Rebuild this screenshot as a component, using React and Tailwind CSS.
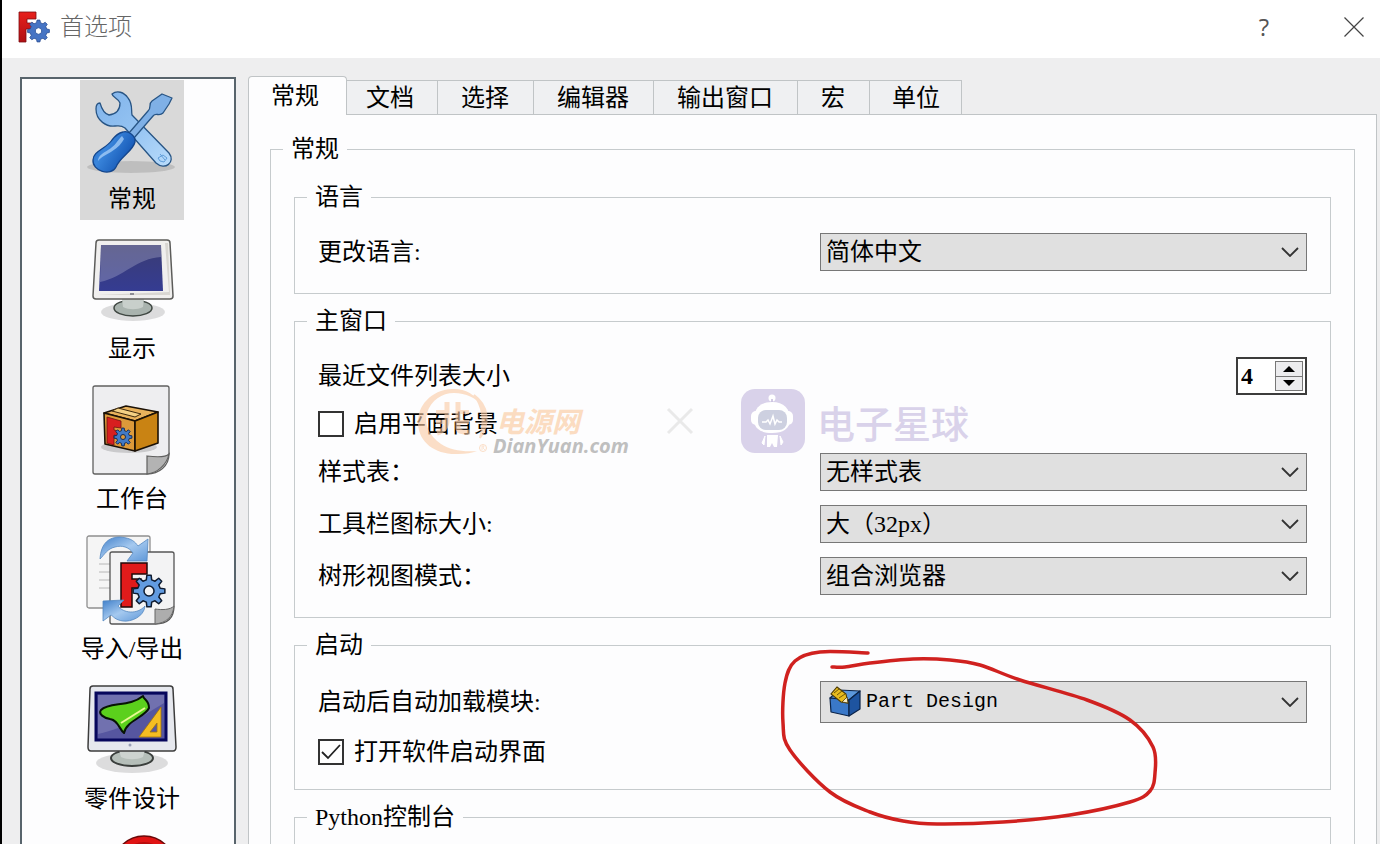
import React, { useState } from "react";

const FONT = "font-['Liberation_Serif','Noto_Sans_CJK_SC',sans-serif]";

function gearPath(cx, cy, outer, inner, teeth) {
  const step = (Math.PI * 2) / teeth;
  const pts = [];
  for (let i = 0; i < teeth; i++) {
    const a = i * step - Math.PI / 2;
    [
      [-0.3, inner],
      [-0.17, outer],
      [0.17, outer],
      [0.3, inner],
    ].forEach(([k, r]) => {
      pts.push(`${(cx + Math.cos(a + k * step) * r).toFixed(2)} ${(cy + Math.sin(a + k * step) * r).toFixed(2)}`);
    });
  }
  return `M${pts.join("L")}Z`;
}

function smoothPath(points) {
  let d = `M${points[0][0]} ${points[0][1]}`;
  for (let i = 0; i < points.length - 1; i++) {
    const p0 = points[i - 1] || points[i];
    const p1 = points[i];
    const p2 = points[i + 1];
    const p3 = points[i + 2] || p2;
    d += `C${p1[0] + (p2[0] - p0[0]) / 6} ${p1[1] + (p2[1] - p0[1]) / 6} ${p2[0] - (p3[0] - p1[0]) / 6} ${p2[1] - (p3[1] - p1[1]) / 6} ${p2[0]} ${p2[1]}`;
  }
  return d;
}

function AppLogo() {
  return (
    <svg viewBox="0 0 32 32" className="size-8" aria-hidden="true">
      <defs>
        <linearGradient id="logoRed" x1="0" y1="0" x2="0" y2="1">
          <stop offset="0" stopColor="#e8201c" />
          <stop offset="1" stopColor="#b01013" />
        </linearGradient>
      </defs>
      <path d="M1 1H18V8H9V12H15V18H8V31H1Z" fill="url(#logoRed)" stroke="#7c0c12" strokeWidth=".8" />
      <path d={gearPath(20.5, 20, 11, 8.5, 8)} fill="#4674c4" stroke="#2c4f94" strokeWidth=".8" />
      <circle cx="20.500" cy="20" r="3.300" fill="#fff" stroke="#345ca4" />
    </svg>
  );
}

function ToolsIcon() {
  return (
    <svg viewBox="0 0 90 96" className="h-24 w-[90px]" aria-hidden="true">
      <defs>
        <linearGradient id="steel" x1="0" y1="0" x2="1" y2="1">
          <stop offset="0" stopColor="#7fb2ea" />
          <stop offset=".5" stopColor="#94c3f2" />
          <stop offset="1" stopColor="#b9dcfb" />
        </linearGradient>
        <linearGradient id="grip" x1="0" y1="0" x2="1" y2=".6">
          <stop offset="0" stopColor="#1d5bb5" />
          <stop offset=".4" stopColor="#3a86dc" />
          <stop offset="1" stopColor="#0f4fae" />
        </linearGradient>
      </defs>
      <ellipse cx="44" cy="82" rx="44" ry="6" fill="#000" opacity=".12" />
      <path
        d="M25 9C30 5 37 7 41 13C46 19 44 25 45 30L82 68C89 77 78 86 69 78L38 43C34 40 32 41 28 41C20 42 9 36 9 24C9 20 11 18 13 18C15 25 18 29 22 30C30 29 33 24 33 18C31 13 26 13 25 9Z"
        fill="url(#steel)"
        stroke="#285585"
        strokeWidth="1.300"
        strokeLinejoin="round"
      />
      <path d="M42 48L61 26C65 22 61 19 65 16L75 9L85 13L82 19L76 28C72 32 69 27 66 31L47 53Z" fill="#7fb0e6" stroke="#285585" strokeWidth="1.300" strokeLinejoin="round" />
      <path d="M36 47C41 45 49 51 48 57C46 66 33 72 29 82C24 92 5 86 6 75C6 66 19 64 25 55C28 51 32 48 36 47Z" fill="url(#grip)" stroke="#14468c" strokeWidth="1.300" />
      <path d="M35 51C30 56 28 61 21 65C16 68 11 71 11 76C18 68 30 67 37 54Z" fill="#a9d0f8" opacity=".75" />
      <path d="M71 73l5 -3l4 3l-3 4l-4 -1z M73 69l5 6" fill="none" stroke="#4c8fd0" strokeWidth=".8" />
    </svg>
  );
}

function DisplayIcon() {
  return (
    <svg viewBox="0 0 90 96" className="h-24 w-[90px]" aria-hidden="true">
      <defs>
        <linearGradient id="screen" x1="0" y1="0" x2="0" y2="1">
          <stop offset="0" stopColor="#3a3c74" />
          <stop offset="1" stopColor="#353c92" />
        </linearGradient>
      </defs>
      <ellipse cx="46" cy="77" rx="32" ry="9" fill="#000" opacity=".13" />
      <ellipse cx="46" cy="73" rx="19" ry="8" fill="#a9b3ae" stroke="#3f4742" strokeWidth="1.500" />
      <path d="M35 64H57L56 72C50 75 42 75 36 72Z" fill="#c8cfcb" />
      <path d="M12 5H80Q83 5 83 8L86 61Q86 64 83 64H9Q6 64 6 61L9 8Q9 5 12 5Z" fill="#f0efee" stroke="#5c5c5a" strokeWidth="1.500" />
      <path d="M78 8L82 57L10 60H83L81 8Z" fill="#d8d6d2" />
      <path d="M14 10H74L76 56H12Z" fill="url(#screen)" />
      <path d="M14 10H74V22C50 23 37 42 13 47Z" fill="#fff" opacity=".22" />
      <rect x="43" y="58" width="4" height="2" fill="#8c8c94" />
    </svg>
  );
}

function WorkbenchIcon() {
  return (
    <svg viewBox="0 0 90 96" className="h-24 w-[90px]" aria-hidden="true">
      <path d="M8 1H80Q82 1 82 3V69C82 81 72 89 60 89H8Q6 89 6 87V3Q6 1 8 1Z" fill="#eeeef0" stroke="#60605f" strokeWidth="1.300" />
      <ellipse cx="42" cy="62" rx="28" ry="6" fill="#000" opacity=".15" />
      <path d="M60 71C68 72 78 73 82 69C80 79 71 88 60 89Z" fill="#b3b3b3" stroke="#60605f" strokeWidth="1.200" />
      <g stroke="#1b1106" strokeWidth="1.600" strokeLinejoin="round">
        <path d="M17 28L39 21L71 27L48 36Z" fill="#e8b25c" />
        <path d="M17 28L48 36V66L18 59Z" fill="#dd9a3a" />
        <path d="M48 36L71 27V58L48 66Z" fill="#c98313" />
      </g>
      <path d="M25 26L48 32L54 29L31 23Z" fill="#f3d084" stroke="#3c280c" />
      <path d="M20 32L34 36V43L27 42V45L31 46V51L27 50V60L20 58Z" fill="#d81f1f" stroke="#6c1212" strokeWidth=".8" />
      <path d={gearPath(36, 52, 9, 6.5, 8)} fill="#427ac6" stroke="#142c58" />
      <circle cx="36" cy="52" r="2.500" fill="#dd9a3a" stroke="#142c58" />
    </svg>
  );
}

function ImportExportIcon() {
  return (
    <svg viewBox="0 0 90 96" className="h-24 w-[90px] overflow-visible" aria-hidden="true">
      <defs>
        <linearGradient id="arrow" x1="0" y1="0" x2="1" y2="1">
          <stop offset="0" stopColor="#3f7fca" />
          <stop offset=".5" stopColor="#a5c9ef" />
          <stop offset="1" stopColor="#5e97d8" />
        </linearGradient>
      </defs>
      <rect x="0" y="1" width="63" height="72" rx="2" fill="#f5f5f5" stroke="#8f8f8f" strokeWidth="1.300" />
      <path d="M12 29H24M12 37H24M12 45H24M12 53H24" stroke="#b8b8b8" />
      <path d="M25 17H85Q87 17 87 19V71C87 83 80 89 68 89H25Q23 89 23 87V19Q23 17 25 17Z" fill="#f3f3f4" stroke="#555" strokeWidth="1.300" />
      <path d="M68 74C75 75 83 75 87 71C86 82 79 88 68 89Z" fill="#adadad" stroke="#666" />
      <path d="M13 24C14 8 22 2 33 2C45 3 48 7 51 11L61 4L60 26H40L46 18C42 12 35 10 28 12C20 14 18 19 13 24Z" fill="url(#arrow)" stroke="#5488c0" strokeWidth=".8" />
      <path d="M34 28H60V39H45V44H54V53H45V72H34Z" fill="#e01b1b" stroke="#200808" strokeWidth="1.500" />
      <path d="M16 66L37 65L31 71C36 78 50 80 58 71C57 82 44 87 36 86C28 85 26 81 24 80L16 86Z" fill="url(#arrow)" stroke="#5488c0" strokeWidth=".8" />
      <path d={gearPath(62, 56, 16, 11.5, 8)} fill="#629be0" stroke="#0e1b30" strokeWidth="1.500" strokeLinejoin="round" />
      <circle cx="62" cy="56" r="5" fill="#f3f3f4" stroke="#0e1b30" strokeWidth="1.500" />
    </svg>
  );
}

function PartDesignPageIcon() {
  return (
    <svg viewBox="0 0 90 96" className="h-24 w-[90px]" aria-hidden="true">
      <ellipse cx="45" cy="78" rx="36" ry="10" fill="#000" opacity=".13" />
      <ellipse cx="45" cy="73" rx="21" ry="8" fill="#b5beb9" stroke="#3b3f3d" strokeWidth="2" />
      <path d="M32 65H58L56 72C50 75 40 75 34 72Z" fill="#cdd3d0" />
      <path d="M6 1H83Q86 1 86 4L89 62Q89 66 86 66H4Q1 66 1 62L3 4Q3 1 6 1Z" fill="#e6e8ee" stroke="#3c3c3c" strokeWidth="1.500" />
      <rect x="9" y="8" width="70" height="47" fill="#5656a0" stroke="#07075c" strokeWidth="3" />
      <path d="M11 10H77V18C60 28 40 43 11 49Z" fill="#fff" opacity=".16" />
      <path d="M14 25C22 17 43 22 56 11C57 15 62 15 62 23C58 32 39 36 37 48C32 44 31 35 23 34C17 33 11 29 14 25Z" fill="#5bd01c" stroke="#071405" strokeWidth="2" strokeLinejoin="round" />
      <path d="M34 38L58 23" stroke="#eaf994" strokeWidth="2" />
      <path d="M74 22V52H52ZM70 38L63 47H70Z" fill="#f5bd22" fillRule="evenodd" stroke="#a37509" strokeWidth=".8" />
      <circle cx="43" cy="60" r="1.500" fill="#9aa0b8" />
    </svg>
  );
}

function RedPageIcon() {
  return (
    <svg viewBox="0 0 90 96" className="h-24 w-[90px]" aria-hidden="true">
      <circle cx="57" cy="32" r="31" fill="#e01414" stroke="#6a0808" strokeWidth="1.500" />
      <circle cx="57" cy="32" r="25" fill="#b80c0c" />
    </svg>
  );
}

function PartDesignIcon() {
  return (
    <svg viewBox="0 0 32 32" className="pointer-events-none absolute left-[9px] top-[5px] size-8" aria-hidden="true">
      <g stroke="#0b2348" strokeWidth="1.200" strokeLinejoin="round">
        <path d="M1 12L10 4L31 5L20 14Z" fill="#5c98dc" />
        <path d="M1 12L20 14V30L2 26Z" fill="#3a78c8" />
        <path d="M20 14L31 5V23L20 30Z" fill="#1e54a0" />
      </g>
      <path d="M8 1L17 8L19 17L12 16L2 8Z" fill="#e6bb1e" stroke="#4c3a05" strokeWidth="1.100" />
      <path d="M5 7L10 3M8 9L13 5M10 12L16 8" stroke="#6d5608" />
      <path d="M18 11L19 17L13 16Z" fill="#f7ecc8" stroke="#4c3a05" strokeWidth=".8" />
    </svg>
  );
}

const pages = [
  { label: "常规", Icon: ToolsIcon },
  { label: "显示", Icon: DisplayIcon },
  { label: "工作台", Icon: WorkbenchIcon },
  { label: "导入/导出", Icon: ImportExportIcon },
  { label: "零件设计", Icon: PartDesignPageIcon },
  { label: "", Icon: RedPageIcon },
];

const tabs = ["常规", "文档", "选择", "编辑器", "输出窗口", "宏", "单位"];

function Group({ title, children }) {
  return (
    <fieldset className="min-w-0 border border-[#c6cbcd] px-3">
      <legend className="px-2 leading-6">{title}</legend>
      <div className="px-[11px]">{children}</div>
    </fieldset>
  );
}

function Row({ id, label, children }) {
  return (
    <div className="grid grid-cols-2 items-center gap-[15px]">
      <label htmlFor={id} className="leading-6">
        {label}
      </label>
      {children}
    </div>
  );
}

function Select({ id, value, icon }) {
  return (
    <div className="relative">
      <select
        id={id}
        defaultValue={value}
        className={
          icon
            ? "block h-[42px] w-full appearance-none border border-[#777] bg-[#e0e0e0] pl-[45px] pr-10 font-['Liberation_Mono',monospace] text-xl text-black"
            : "block h-[38px] w-full appearance-none border border-[#777] bg-[#e0e0e0] pl-[5px] pr-10 text-2xl leading-8 text-black"
        }
      >
        <option>{value}</option>
      </select>
      {icon}
      <svg viewBox="0 0 18 10" className="pointer-events-none absolute inset-y-0 right-2 my-auto h-[10px] w-[18px]" aria-hidden="true">
        <path d="M1 1L9 9L17 1" fill="none" stroke="#333" strokeWidth="1.800" />
      </svg>
    </div>
  );
}

function CheckRow({ label, checked, onChange }) {
  return (
    <label className="flex h-[30px] items-center gap-[10px]">
      <span className="relative block size-[26px]">
        <input type="checkbox" checked={checked} onChange={onChange} className="block size-[26px] appearance-none border-2 border-[#333] bg-white" />
        {checked && (
          <svg viewBox="0 0 26 26" className="pointer-events-none absolute inset-0 size-[26px]" aria-hidden="true">
            <path d="M4 13L10 19L22 6" fill="none" stroke="#222" strokeWidth="1.800" />
          </svg>
        )}
      </span>
      <span className="leading-6">{label}</span>
    </label>
  );
}

function SpinBox({ id }) {
  const [n, setN] = useState(4);
  return (
    <div className="flex h-[38px] w-[71px] items-center justify-self-end border-2 border-[#3c3c3c] bg-white pr-[2px]">
      <input
        id={id}
        inputMode="numeric"
        value={n}
        onChange={(e) => setN(Number(e.target.value) || 0)}
        className="h-full w-0 flex-1 bg-transparent pl-[3px] text-2xl font-bold outline-none"
      />
      <div className="flex h-[30px] w-7 flex-col border border-[#777] bg-[#ececee]">
        <button type="button" aria-label="增加" onClick={() => setN(n + 1)} className="flex flex-1 items-center justify-center border-b border-[#777]">
          <svg viewBox="0 0 12 6" className="h-[6px] w-3">
            <path d="M6 0L12 6H0Z" />
          </svg>
        </button>
        <button type="button" aria-label="减少" onClick={() => setN(n - 1)} className="flex flex-1 items-center justify-center">
          <svg viewBox="0 0 12 6" className="h-[6px] w-3">
            <path d="M0 0H12L6 6Z" />
          </svg>
        </button>
      </div>
    </div>
  );
}

function Watermark() {
  return (
    <div className="pointer-events-none absolute left-[414px] top-[386px] h-[72px] w-[554px]">
      <svg viewBox="0 0 76 72" className="absolute left-0 top-0 h-[72px] w-[76px] opacity-60" aria-hidden="true">
        <path
          d="M66 20C59 7 47 2 36 3C15 4 1 20 2 38C3 57 20 69 42 68C50 68 56 67 61 65C46 66 34 64 25 58C13 50 8 38 11 27C15 14 26 7 38 7C50 7 60 12 66 20Z"
          fill="#fbcba3"
        />
        <path d="M58 9C72 19 75 37 64 52C68 38 68 22 58 9Z" fill="#fbcba3" stroke="#fbcba3" strokeWidth="2" />
        <g fill="none" stroke="#fbcba3" strokeWidth="5">
          <path d="M31 16V34Q31 44 21 47M42 16V42Q42 47 54 46" />
          <path d="M20 26H31M42 26H53M20 36H31M42 36H53" strokeWidth="4" />
        </g>
        <circle cx="67" cy="62" r="3.500" fill="none" stroke="#fbcba3" />
        <path d="M66 64V60H68L67 62L69 64" fill="none" stroke="#fbcba3" strokeWidth=".8" />
      </svg>
      <span className="absolute left-20 top-5 whitespace-nowrap font-['Noto_Sans_CJK_SC',sans-serif] text-[28px] font-bold italic leading-7 text-[#fbdcc1]">电源网</span>
      <span className="absolute left-[77px] top-12 whitespace-nowrap font-['Open_Sans',sans-serif] text-xl font-bold italic leading-6 text-[#bfbfbf]">DianYuan.com</span>
      <svg viewBox="0 0 28 28" className="absolute left-[250px] top-[21px] size-7" aria-hidden="true">
        <path d="M2 2L26 26M26 2L2 26" stroke="#e9e9e9" strokeWidth="3" />
      </svg>
      <svg viewBox="0 0 64 64" className="absolute left-[325px] top-[3px] size-16" aria-hidden="true">
        <rect width="64" height="64" rx="14" fill="#d9d2ea" />
        <circle cx="31" cy="9" r="3.500" fill="#fff" />
        <path d="M31 10V16" stroke="#c3badb" strokeWidth="1.500" />
        <rect x="10" y="22" width="42" height="14" rx="5" fill="#fff" />
        <path d="M31 13C43 13 49 20 49 30C49 40 42 44 31 44C20 44 13 40 13 30C13 20 19 13 31 13Z" fill="#fff" />
        <rect x="17" y="21" width="29" height="20" rx="8" fill="#cdd0e0" />
        <path d="M21 33H25L27 31L29 35L32 27L34 35L36 31L38 33H41" fill="none" stroke="#fff" strokeWidth="1.500" />
        <path d="M26 46H37L36 58H33L31 54L29 58H26Z" fill="#fff" />
        <path d="M24 47L21 54L23 56ZM39 47L42 53L40 56Z" fill="#fff" stroke="#fff" strokeLinejoin="round" />
      </svg>
      <span className="absolute left-[401px] top-4 whitespace-nowrap font-['Noto_Sans_CJK_SC',sans-serif] text-[38px] font-medium leading-10 text-[#d9d2ea]">电子星球</span>
    </div>
  );
}

const strokePoints = [
  [868, 653], [820, 652], [795, 661], [785, 683], [783, 723], [790, 750], [830, 792], [870, 812],
  [903, 821], [937, 824], [1003, 822], [1070, 815], [1130, 802], [1150, 791], [1155, 773], [1153, 747],
  [1130, 720], [1087, 700], [1020, 680], [980, 665], [950, 660], [913, 659], [870, 663], [845, 667], [832, 667],
].map(([x, y]) => [x - 776, y - 646]);

export default function App() {
  const [page, setPage] = useState(0);
  const [tab, setTab] = useState(0);
  const [flat, setFlat] = useState(false);
  const [splash, setSplash] = useState(true);

  return (
    <div className={`relative flex h-screen flex-col overflow-hidden border-l-2 border-black bg-[#eeeeef] text-2xl text-black ${FONT}`}>
      <header className="flex h-[58px] shrink-0 items-center bg-white pb-1 pl-4 pr-4">
        <AppLogo />
        <h1 className="ml-[10px] flex-1 font-light leading-8 text-[#666]">首选项</h1>
        <button type="button" aria-label="帮助" className="w-8 font-['Open_Sans',sans-serif] leading-8 text-[#555]">
          ?
        </button>
        <button type="button" aria-label="关闭" className="ml-16">
          <svg viewBox="0 0 20 20" className="size-5">
            <path d="M.5 .5L19.500 19.500M19.500 .5L.5 19.500" stroke="#444" strokeWidth="1.200" />
          </svg>
        </button>
      </header>

      <div className="flex min-h-0 flex-1 gap-3 pl-[18px] pr-[3px] pt-[18px]">
        <nav className="mt-px w-[216px] shrink-0 overflow-hidden border-2 border-b-0 border-[#58646c] bg-[#fdfdfe] pt-px">
          <ul className="flex flex-col items-center gap-[10px] pl-2">
            {pages.map(({ label, Icon }, i) => (
              <li key={i}>
                <button
                  type="button"
                  aria-label={label || "其他"}
                  onClick={() => setPage(i)}
                  className={`flex h-[140px] w-[104px] flex-col items-center gap-[6px] pt-[5px] ${page === i ? "bg-[#d9d9d9]" : ""}`}
                >
                  <Icon />
                  <span className="whitespace-nowrap leading-6">{label}</span>
                </button>
              </li>
            ))}
          </ul>
        </nav>

        <main className="flex min-w-0 flex-1 flex-col">
          <div role="tablist" className="flex h-[38px] shrink-0 items-end">
            {tabs.map((t, i) => (
              <button
                key={t}
                type="button"
                role="tab"
                aria-selected={tab === i}
                onClick={() => setTab(i)}
                className={
                  tab === i
                    ? "relative -mb-px h-[39px] rounded-t-sm border border-b-0 border-[#c0c4c6] bg-[#fdfdfe] pl-[22px] pr-[27px] leading-6"
                    : "h-[34px] border-r border-t border-[#c0c4c6] bg-[#eff0f2] px-[23px] pt-px leading-6 nth-[2]:pl-[19px] nth-[3]:pr-6 nth-[4]:pr-6 nth-[5]:pr-6 nth-[6]:pr-6 last:pl-[22px] last:pr-[21px]"
                }
              >
                {t}
              </button>
            ))}
          </div>

          <div role="tabpanel" className="min-h-0 flex-1 overflow-hidden border border-b-0 border-[#c0c4c6] bg-[#fdfdfe] px-[21px] pt-[22px]">
            <fieldset className="min-w-0 border border-[#c6cbcd] px-3">
              <legend className="px-2 leading-6">常规</legend>
              <div className="flex flex-col gap-[15px] px-[11px] pt-6">
                <Group title="语言">
                  <div className="pb-[22px] pt-6">
                    <Row id="language" label="更改语言:">
                      <Select id="language" value="简体中文" />
                    </Row>
                  </div>
                </Group>

                <Group title="主窗口">
                  <div className="flex flex-col gap-[14px] pb-[22px] pt-6">
                    <Row id="recent" label="最近文件列表大小">
                      <SpinBox id="recent" />
                    </Row>
                    <CheckRow label="启用平面背景" checked={flat} onChange={() => setFlat(!flat)} />
                    <Row id="style" label="样式表：">
                      <Select id="style" value="无样式表" />
                    </Row>
                    <Row id="icons" label="工具栏图标大小:">
                      <Select id="icons" value="大（32px）" />
                    </Row>
                    <Row id="tree" label="树形视图模式：">
                      <Select id="tree" value="组合浏览器" />
                    </Row>
                  </div>
                </Group>

                <Group title="启动">
                  <div className="flex flex-col gap-[14px] pb-[22px] pt-6">
                    <Row id="module" label="启动后自动加载模块:">
                      <Select id="module" value="Part Design" icon={<PartDesignIcon />} />
                    </Row>
                    <CheckRow label="打开软件启动界面" checked={splash} onChange={() => setSplash(!splash)} />
                  </div>
                </Group>

                <Group title="Python控制台">
                  <div className="h-24" />
                </Group>
              </div>
            </fieldset>
          </div>
        </main>
      </div>

      <Watermark />
      <svg viewBox="0 0 384 184" className="pointer-events-none absolute left-[774px] top-[646px] h-[184px] w-[384px]" aria-hidden="true">
        <path d={smoothPath(strokePoints)} fill="none" stroke="#d0211f" strokeWidth="3.500" strokeLinecap="round" />
      </svg>
    </div>
  );
}
